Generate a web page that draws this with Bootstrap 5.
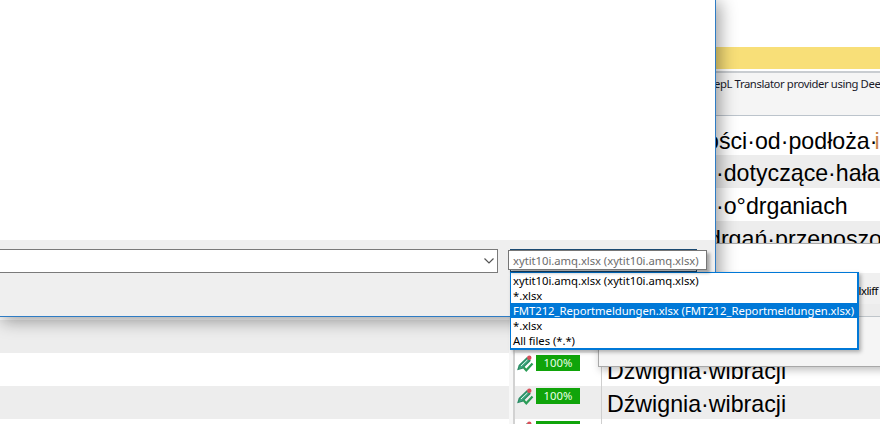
<!DOCTYPE html>
<html lang="pl">
<head>
<meta charset="utf-8">
<title>Okno</title>
<link rel="stylesheet" href="https://cdn.jsdelivr.net/npm/bootstrap@5.3.0/dist/css/bootstrap.min.css">
<style>
html,body{margin:0;width:880px;height:424px;overflow:hidden;background:#fff}
body{font-family:"Noto Sans","Liberation Sans",sans-serif;font-size:11.3px;line-height:15px;color:#000}
.stage{position:relative;width:880px;height:424px;overflow:hidden}
.app>*{flex:none}
.top-gap{height:47px}
.yellow-bar{height:22px;background:#f8df78}
.mini-gap{height:2px}
.rule-bar{height:2px;background:#c9cdd1}
.info-panel{height:43px;background:#f5f5f5;border-bottom:1px solid #bcc4cc;padding:3px 0 0 716px;white-space:nowrap;overflow:hidden;font-size:11.3px;letter-spacing:-.4px}
.info-panel span{margin-left:-2px;display:block;color:#1a1a2a}
.top-pad{height:4px}
.seg-row{font-family:"Liberation Sans",sans-serif;font-size:23.2px;line-height:37px;height:33px;white-space:nowrap;overflow:hidden}
.seg-row.first{height:35px;line-height:42px}
.seg-row.tinted{background:#ededed}
.seg-text{padding-left:716px;display:block}
.s1 .seg-text{text-indent:-10px}
.s4 .seg-text{text-indent:-8px}
.i-tag{color:#c8864a;margin-left:-3px}
.hidden-gap{height:66px}
.seg-row.lower{display:flex}
.lead-cell{width:515px;flex:none;border-right:2px solid #d2d2d2;box-shadow:inset -4px 0 0 #f7f7f7}
.state-cell{width:87px;flex:none;border-right:1px solid #cfcfcf;display:flex;align-items:flex-start;padding:2px 0 0 1px;gap:2px}
.text-cell{padding-left:5px;flex:1}
.pct-chip{width:44px;height:16px;background:#10a40a;color:#e8ffe8;font-family:"Noto Sans",sans-serif;font-size:11.3px;line-height:16px;text-align:center}
.pen-ico{width:18px;height:18px;flex:none;overflow:visible}
.win-main{position:absolute;left:-2px;top:-2px;width:718px;height:319px;background:#fff;border:1px solid #2f7cc4;border-width:0 1px 1px 0;box-shadow:4px 4px 16px rgba(0,0,0,.38);display:flex;flex-direction:column}
.win-white{height:242px;flex:none}
.win-foot{flex:1;background:#efefef;padding-top:9px;padding-left:2px}
.combo-box{width:498px;height:24px;background:#fff;border:1px solid #7a7a7a;border-left:0;position:relative}
.combo-box svg{position:absolute;right:2px;top:7px}
.win-second{position:absolute;left:598px;top:243px;width:290px;height:124px;background:#fff;border:1px solid #a8a8a8;box-shadow:2px 3px 8px rgba(0,0,0,.25);display:flex;flex-direction:column}
.sec-white{height:29px}
.sec-tool{height:31px;background:#f0f0f0;display:flex;justify-content:flex-end;align-items:center;padding:4px 9px 0 0;font-size:11.3px;white-space:nowrap;letter-spacing:-.5px}
.sec-band{height:13px;background:#ececec;border-bottom:1px solid #bfc5ca}
.sec-rest{flex:1;background:#f5f5f5}
.combo-edge{position:absolute;left:510px;top:249px;width:187px;height:23px;background:#e6e6e6;border:1px solid #1c4a72}
.drop-list{position:absolute;left:510px;top:272px;width:349px;height:78px;background:#fff;border:2px solid #0078d7;border-width:1px 2px 2px 1px;box-shadow:2px 2px 4px rgba(0,0,0,.3);border-radius:0;white-space:nowrap}
.drop-list .list-group-item{border:0;border-radius:0;padding:0 2px;height:15px;line-height:15px;font-size:11.3px;letter-spacing:-.05px;background:transparent;color:#000}
.drop-list .list-group-item.active{background:#0078d7;color:#fff;margin:0}
.name-tip{position:absolute;left:508px;top:250px;width:199px;height:20px;background:#fff;border:1px solid #767676;color:#6d6d6d;padding:2px 4px;font-size:11.3px;letter-spacing:-.05px;white-space:nowrap;box-shadow:3px 3px 3px rgba(0,0,0,.3)}
</style>
</head>
<body>
<div class="stage">
  <div class="app d-flex flex-column">
    <div class="top-gap"></div>
    <div class="yellow-bar"></div>
    <div class="mini-gap"></div>
    <div class="rule-bar"></div>
    <div class="info-panel"><span>epL Translator provider using DeepL</span></div>
    <div class="top-pad"></div>
    <div class="seg-row first s1"><span class="seg-text">ości·od·podłoża·<span class="i-tag">i</span></span></div>
    <div class="seg-row tinted s2"><span class="seg-text">·dotyczące·hała</span></div>
    <div class="seg-row s3"><span class="seg-text">·o°drganiach</span></div>
    <div class="seg-row tinted s4"><span class="seg-text">drgań·przenoszo</span></div>
    <div class="hidden-gap"></div>
    <div class="seg-row lower tinted">
      <div class="lead-cell"></div>
      <div class="state-cell"></div>
      <div class="text-cell"></div>
    </div>
    <div class="seg-row lower">
      <div class="lead-cell"></div>
      <div class="state-cell"><svg class="pen-ico" viewBox="0 0 18 18"><path d="M2 14.5 L3.3 10.3 L11 2.8 L14 5.8 L6.3 13.3 Z" fill="#3aa57c" stroke="#2a8a63" stroke-width="1.2"/><path d="M5 11 L11.5 4.8" stroke="#e6f5ee" stroke-width="1"/><circle cx="13.3" cy="2.8" r="2.2" fill="#d8505a"/><path d="M7.5 12.3 L10.3 15.3 L16.5 8.5" fill="none" stroke="#2a9d56" stroke-width="2.2"/></svg><div class="pct-chip">100%</div></div>
      <div class="text-cell">Dźwignia·wibracji</div>
    </div>
    <div class="seg-row lower tinted">
      <div class="lead-cell"></div>
      <div class="state-cell"><svg class="pen-ico" viewBox="0 0 18 18"><path d="M2 14.5 L3.3 10.3 L11 2.8 L14 5.8 L6.3 13.3 Z" fill="#3aa57c" stroke="#2a8a63" stroke-width="1.2"/><path d="M5 11 L11.5 4.8" stroke="#e6f5ee" stroke-width="1"/><circle cx="13.3" cy="2.8" r="2.2" fill="#d8505a"/><path d="M7.5 12.3 L10.3 15.3 L16.5 8.5" fill="none" stroke="#2a9d56" stroke-width="2.2"/></svg><div class="pct-chip">100%</div></div>
      <div class="text-cell">Dźwignia·wibracji</div>
    </div>
    <div class="seg-row lower">
      <div class="lead-cell"></div>
      <div class="state-cell"><svg class="pen-ico" viewBox="0 0 18 18"><path d="M2 14.5 L3.3 10.3 L11 2.8 L14 5.8 L6.3 13.3 Z" fill="#3aa57c" stroke="#2a8a63" stroke-width="1.2"/><circle cx="13.3" cy="2.8" r="2.2" fill="#d8505a"/></svg><div class="pct-chip"></div></div>
      <div class="text-cell"></div>
    </div>
  </div>

  <div class="win-second">
    <div class="sec-white"></div>
    <div class="sec-tool">dlxliff</div>
    <div class="sec-band"></div>
    <div class="sec-rest"></div>
  </div>

  <div class="win-main">
    <div class="win-white"></div>
    <div class="win-foot">
      <div class="combo-box"><svg width="12" height="8" viewBox="0 0 12 8"><path d="M1.5 1.5 L6 6 L10.5 1.5" fill="none" stroke="#555" stroke-width="1.2"/></svg></div>
    </div>
  </div>

  <div class="combo-edge"></div>
  <div class="list-group drop-list">
    <div class="list-group-item">xytit10i.amq.xlsx (xytit10i.amq.xlsx)</div>
    <div class="list-group-item">*.xlsx</div>
    <div class="list-group-item active">FMT212_Reportmeldungen.xlsx (FMT212_Reportmeldungen.xlsx)</div>
    <div class="list-group-item">*.xlsx</div>
    <div class="list-group-item">All files (*.*)</div>
  </div>
  <div class="name-tip">xytit10i.amq.xlsx (xytit10i.amq.xlsx)</div>
</div>
</body>
</html>
